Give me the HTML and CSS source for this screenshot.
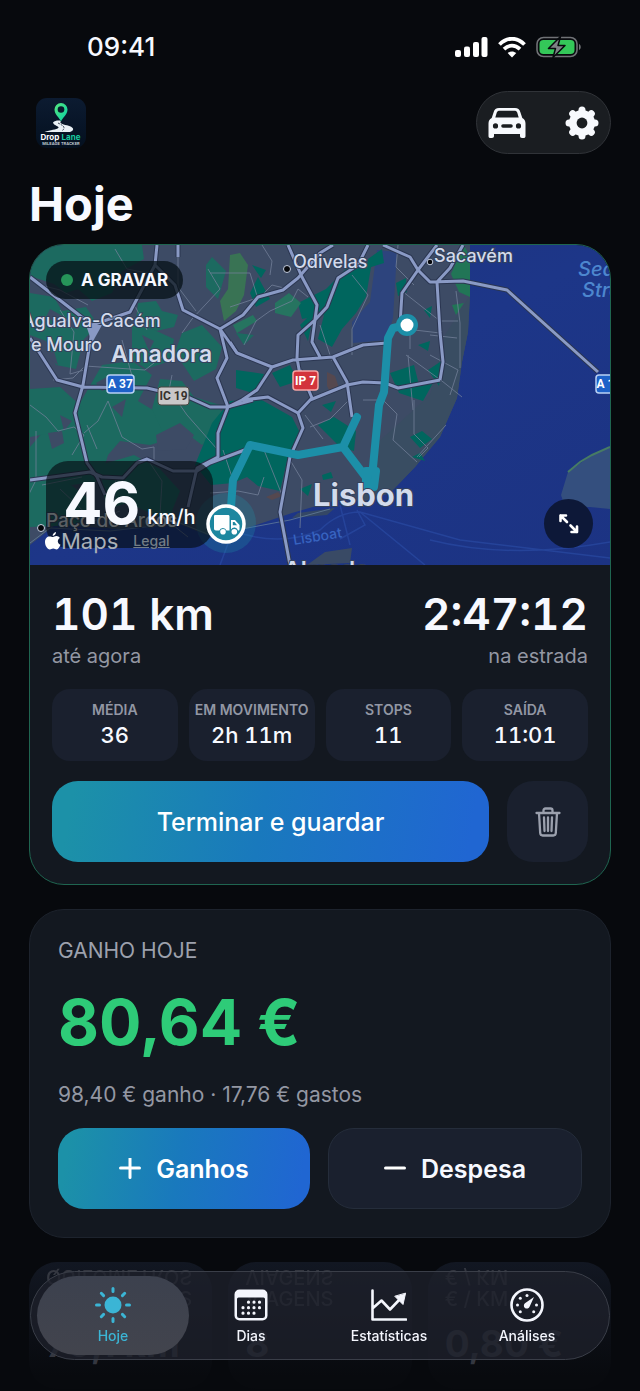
FILE: index.html
```html
<!DOCTYPE html>
<html lang="pt">
<head>
<meta charset="utf-8">
<meta name="viewport" content="width=device-width, initial-scale=1">
<title>Drop Lane</title>
<link rel="stylesheet" href="styles.css">
</head>
<body>
<div class="app">
  <div class="status">
    <time class="clock">09:41</time>
    <div class="status-icons">
      <svg width="33" height="21" viewBox="0 0 33 21" fill="#fff"><rect x="0" y="13" width="6" height="7" rx="2"/><rect x="9" y="9.500" width="6" height="10.500" rx="2"/><rect x="18" y="5" width="6" height="15" rx="2"/><rect x="26.500" y="0" width="6" height="20" rx="2"/></svg>
      <svg width="28" height="21" viewBox="0 0 28 21" fill="none" stroke="#fff" stroke-width="3.800"><path d="M1.500 7.500C9-.2 19-.2 26.500 7.500"/><path d="M6 12.200c5-4.600 11-4.600 16 0"/><path d="M14 20.500l-4.300-4.400c2.700-2.100 5.900-2.100 8.600 0z" fill="#fff" stroke="none"/></svg>
      <svg width="46" height="23" viewBox="0 0 46 23"><rect x="1" y="1.500" width="40" height="19" rx="6.500" fill="none" stroke="#707276" stroke-width="1.600"/><rect x="3.500" y="4" width="35" height="14" rx="4" fill="#34c759"/><path d="M43 8v6c2.300-.8 2.300-5.200 0-6z" fill="#707276"/><path d="M24.500.5L12.500 12.500h7L17 21.500 29 9.500h-7z" fill="#7d8084" stroke="#07090d" stroke-width="1.500" stroke-linejoin="round"/></svg>
    </div>
  </div>

  <header class="top">
    <svg class="logo" viewBox="0 0 50 50" role="img" aria-label="Drop Lane">
      <defs><linearGradient id="lg" x1="0" y1="0" x2="0" y2="1"><stop offset="0" stop-color="#0c1b31"/><stop offset="1" stop-color="#04101f"/></linearGradient>
      <linearGradient id="pin" x1="0" y1="0" x2="1" y2="1"><stop offset="0" stop-color="#58e77d"/><stop offset="1" stop-color="#04cfa8"/></linearGradient></defs>
      <rect width="50" height="50" rx="11" fill="url(#lg)"/>
      <path d="M17 24.500c2-2 6-2.500 8-1.500-2 2 1 3.200 6 4.300 7 1.700 8 5 3 6.700H8.500c6-2 12-2.300 14-4.200 1-1.500-5-2.300-5.500-5.300z" fill="#e9f0f5"/>
      <path d="M22 25c5 2.500 8 4 4.500 7.500" fill="none" stroke="#0b192c" stroke-width=".8" stroke-dasharray="2 1"/>
      <path d="M25 23.500c-1.500-4-6.500-7-6.500-12a6.500 6.500 0 0 1 13 0c0 5-5 8-6.500 12z" fill="url(#pin)"/><circle cx="25" cy="11.500" r="3.300" fill="#0a192d"/>
      <text x="4.500" y="41.500" class="logo-name" fill="#fff">Drop</text><text x="25.500" y="41.500" class="logo-name" fill="#18cba0">Lane</text>
      <text x="25" y="47" text-anchor="middle" class="logo-sub" fill="#cbd5de">MILEAGE TRACKER</text>
    </svg>
    <div class="actions">
      <button class="icon-btn" aria-label="Veículo"><svg width="38" height="32" viewBox="0 0 38 32"><path fill="#f7f9fd" fill-rule="evenodd" d="M11 1h16c3 0 4.500 1.500 5.300 4l2 6c2.200 1.200 3.200 3 3.200 5.500V29c0 1.500-.7 2-2 2H34c-1.300 0-2-.7-2-2v-2H6v2c0 1.300-.7 2-2 2H2.500c-1.300 0-2-.5-2-2V16.500c0-2.500 1-4.300 3.200-5.500l2-6C6.500 2.500 8 1 11 1zm.7 2.800c-1.500 0-2.500.5-3 2L7.300 10.500h23.400l-1.400-4.700c-.5-1.500-1.500-2-3-2zM7.500 16.300a2.600 2.600 0 1 0 0 5.200 2.600 2.600 0 0 0 0-5.200zm23 0a2.600 2.600 0 1 0 0 5.200 2.600 2.600 0 0 0 0-5.200zM15 17.300c-2.300 0-2.300 3.400 0 3.400h8c2.300 0 2.300-3.400 0-3.400z"/></svg></button>
      <button class="icon-btn" aria-label="Definições"><svg width="34" height="34" viewBox="-17 -17 34 34"><path d="M0-13V13M-13 0H13M-9.300-9.300L9.300 9.300M9.300-9.300L-9.300 9.300" stroke="#f7f9fd" stroke-width="7" stroke-linecap="round"/><circle r="13" fill="#f7f9fd"/><circle r="5.400" fill="#1a1d21"/></svg></button>
    </div>
  </header>

  <h1 class="title">Hoje</h1>

  <section class="card trip">
    <div class="map">
      <svg class="map-art" viewBox="0 0 580 320" preserveAspectRatio="xMidYMid slice">
        <defs><linearGradient id="sea" x1="0" y1="0" x2="1" y2="1"><stop offset="0" stop-color="#1d337c"/><stop offset=".5" stop-color="#1d3688"/><stop offset="1" stop-color="#1c3383"/></linearGradient></defs>
        <rect width="580" height="320" fill="url(#sea)"/>
        <path d="M0 0H440V50L438 87 432 117 427 153 410 192 385 222 360 248 335 256 307 255 262 268 217 283 177 290 147 278 90 284 25 280 0 300z" fill="#3d4b65"/>
        <path d="M440 50L438 87 432 117 427 153 410 192 385 222 360 248 330 255 345 200 400 150 415 90z" fill="#394d62"/>
        <path d="M580 202L562 210 538 227 531 250 535 262 560 262 580 264z" fill="#344f7e"/>
        <path d="M538 227l12-10 12-7 18-8" fill="none" stroke="#477b64" stroke-width="2"/>
        <path d="M322 303L320 318 277 320 295 307z" fill="#394a65"/>
        <path d="M268 268l37-5-8 7-35 3z" fill="#344765"/>
        <path d="M347 5l20 2-4 66-6 22-34 3-1-21 18-20z" fill="#2d447d"/>
        <g fill="#1c6a60">
          <path d="M0 0h112l2 14-22 12-10 22-20 8-14-12-12 4-12-9-24-8z"/>
          <path d="M0 48l24 4 8 14 24-4 12 18-14 14-8 30-20-4-10-24-16-6z"/>
          <path d="M108 58l18-2 6 10 16 4-4 12-18 4-20-10z"/><path d="M102 80l20 4 22 10-4 22-24 8-14-10z"/>
          <path d="M152 88l20-8 20 22-6 22-22 12-12-18-8-8z"/><path d="M72 120l30-4 20 14-14 26 20 12 18 24-26 8-30-4-12 14-8 26-28 4-42-6v-32l26-30 24-14z"/>
          <path d="M0 144l30-2 22 20-20 24-32 6z"/><path d="M130 134l22 2 12 16 26 8 4 22-22 18-16-12-20 6-14-30z"/>
          <path d="M176 20l6-8 14 14-8 28-12-12zM206 88l18 2-10 10z"/><path d="M0 226l28 4 34 26-12 24-50 2z"/><path d="M70 220l34-10 26 14 20 22-12 30-40-18-22 6z"/>
        </g>
        <g fill="#00665e">
          <path d="M182 178l18-22 30-2 32 18 8 16-13 28-7 30-22-5-11-9-14 6-22 2-16-20z"/>
          <path d="M268 58l28-14 20-20 26-8-6 36-10 16-14 16-10 18-14-8 6-24-22 4z"/><path d="M270 80l14-14-6 30zM220 48l8-16 12 22-14 8zM338 14l14-10 2 14-16 5z"/>
          <path d="M360 128l24-8 5 20 14-2-10 18-24-8zM366 38l10-5 1 14-9 4zM388 100l12-4-2 10zM394 65l8-4-2 12z"/>
          <path d="M380 192l12-6 10 8-12 9zM288 180l16-8 22 14-2 20-14-4zM292 160l14-4-5 11zM270 244l12-5-4 12zM292 230l9-3 2 6-10 2zM382 212l8-4 5 8z"/>
          <path d="M206 125l28 4-8 20-20-6zM242 128l18-8 8 16-18 6zM398 125l15-10-4 26zM222 20l14 5-5 8z"/>
        </g>
        <path d="M434 0l6 12v40l-11-5-8-18zM422 60l12-2-8 12z" fill="#217556"/>
        <g fill="#397354"><path d="M200 10l10-2 8 12-4 30-8 16-12 10-4-20 8-12z"/><path d="M245 58l14-10 12 10-10 14-16-4zM203 80l20-10 4 6-20 12z" fill="#267460"/></g>
        <path d="M297 127l8 4 4 12-8 6-4-8zM236 252l12-5 4 4-10 4z" fill="#55484f"/>
        <g fill="#3d4b65"><path d="M20 64l18 10 14 0-4 10-18-4-14-8zM30 170l12 6-8 10zM82 162l14-8-4 18zM126 190l24-12 14 12-8 14-28 2zM18 188l14-2 2 12-12 6zM112 90l12 6-5 10zM66 138l14-8 6 10-14 6zM14 110l10-4 4 14z"/></g>
        <g fill="none" stroke="#75829b" stroke-width="1" opacity=".75">
          <path d="M10 40l20 5 28 15M85 4l12 20 20 4M30 65l14 22-4 42 14-4M23 135l20-2 12-12 60 4 18-14M92 95l10 36M117 85l-12-24M142 130l-4 20M0 160l16 12 12 14 16-4 10 8-12 20M6 186v49l-10 20M54 188l14-12 10-20 14 36 20 12 12-2v14M57 180l10 24M143 150l14 20 30 34M148 4v38l18 24M178 24l12 20-28 30-10 14"/>
          <path d="M180 28h40l8 26 14-14 16 4M232 0l10 16-2 14M200 62l30-10M214 100l12-24 14-10 22-10 6-12 10 8M290 80l12 36M322 30l16 20-16 34v26M368 0l-2 22 18 18M372 46l38 30M376 84l34 4M376 110l36 26 20 16M378 110l5 55M380 104v-24M426 46l4 32v45M408 76h20M400 90l27 3M400 110l28 15-8 25"/>
          <path d="M180 248l28-2 20 4 6-18M234 205l18 45M203 235l-10-30M260 215l12 20-2 48M280 182l20-8 20-20M275 170l18 24M333 155l20 0 14 14-4 26 24 22M384 155v34l14 14-9 9M416 180l-29 32M120 218l12 18-2 34 28 22M12 240l40-8M30 244l34 32 26-10M86 234l-4 48"/>
          <path d="M0 298l20-15 60 3 70-8 30 12 80-15 40-11" stroke="#66809c"/>
        </g>
        <path d="M200 285q50 18 90 0 18-18 40-18l100 28 150 18M330 267l65 53M320 300l-10-40M327 265l8 15-25 14M190 320l18-48M400 295q80 20 180 2" fill="none" stroke="#294aa3" stroke-width="1.500" opacity=".7"/>
        <g class="roads"><g id="roads">
          <path d="M0 32L62 80 100 67 125 20 127 0M63 80L53 140 45 168 57 218 67 232 75 250M0 93L27 135 53 142 117 143 160 153 180 162 197 162 223 155M125 20L145 40 153 65 190 84 207 108M190 84L197 113 187 133 198 162 188 188V212L167 223 158 262"/>
          <path d="M190 84L213 70 228 52 253 45 268 33 290 8 303 0M148 0v12M258 0L272 32 287 60 282 97 290 112M338 0L328 20 308 33 297 62 285 75 268 90 267 113 270 130M200 97L207 108 242 122 263 115 303 112 333 100 357 98M242 122L227 145 212 155 198 162M303 112L317 137 322 172M212 155L238 152 268 168"/>
          <path d="M270 125L282 153M280 155L317 140 333 137 355 138 368 143 410 135M282 153L268 168 273 183 260 212 250 267 260 320M353 0L380 12 388 25 400 37 433 36 477 45 568 127M407 0L388 25 372 48 370 80M407 37L410 87 413 117 410 135M433 0L420 23 407 37"/>
          <path d="M0 235L60 227 72 232 93 233 107 218 117 214 143 226 167 226 180 218 220 203"/>
        </g></g>
        <use href="#roads" class="roads-top"/>
        <path d="M56 80h16l-10 18z" fill="#8999c4"/>
        <path d="M377 80L363 83 358 93 354 147 349 160 343 222 338 240M338 235L313 202 327 172M313 202L268 210 220 200 203 235 201 262" class="route"/>
        <path d="M336 226h10l-2 16h-8z" class="route"/>
        <circle cx="377" cy="80" r="11" fill="#1c8fa8"/><circle cx="377" cy="80" r="6.500" fill="#fff"/>
        <circle cx="196" cy="278" r="30" fill="#1c8fa8" opacity=".28"/>
        <g fill="#05070b" stroke="#c5cee0" stroke-width="1"><circle cx="257" cy="24" r="3.500"/><circle cx="400" cy="17" r="2.800"/><circle cx="11" cy="283" r="3.500"/></g>
        <g class="place">
          <text x="263" y="23">Odivelas</text><text x="404" y="17">Sacavém</text><text x="-8" y="82">Agualva-Cacém</text><text x="1" y="106">e Mouro</text>
          <text x="81" y="117" class="town">Amadora</text><text x="283" y="261" class="city">Lisbon</text><text x="16" y="282" class="veiled">Paço de Arcos</text>
          <text x="254" y="333" class="town">Almada</text>
        </g>
        <g class="water-name"><text x="548" y="31">Sea of</text><text x="552" y="52">Straw</text><text x="264" y="300" class="ferry" transform="rotate(-9 264 300)">Lisboat</text></g>
        <g class="shield">
          <rect x="77" y="130" width="27" height="18" rx="3" fill="#1d61c8" stroke="#b9d1f4" stroke-width="1.500"/><text x="90.500" y="143">A 37</text>
          <rect x="566" y="130" width="27" height="18" rx="3" fill="#1d61c8" stroke="#b9d1f4" stroke-width="1.500"/><text x="579" y="143">A 12</text>
          <rect x="128" y="142" width="31" height="18" rx="3" fill="#c9c8c9" stroke="#4b4742" stroke-width="1"/><text x="143.500" y="155" class="dark">IC 19</text>
          <rect x="263" y="126" width="25" height="19" rx="3" fill="#d3343c" stroke="#f5a5a5" stroke-width="1.500"/><text x="275.500" y="140">IP 7</text>
        </g>
      </svg>
      <div class="speed"><strong>46</strong><span>km/h</span></div>
      <svg class="truck" viewBox="0 0 40 40"><circle cx="20" cy="20" r="18" fill="#1d879f" stroke="#fff" stroke-width="3.500"/><path d="M9 11h13c1 0 1.500.5 1.500 1.500v14h-3a3.800 3.800 0 0 0-7.200 0h-3.300c-1.300 0-2-.7-2-2V12.500c0-1 .5-1.500 1-1.500zM25 16h4l4.500 5v4c0 1-.5 1.500-1.500 1.500a3.800 3.800 0 0 0-7-1z" fill="#fff"/><path d="M26.800 18h1.700l2.500 3.200h-4.200z" fill="#1d879f"/><circle cx="17" cy="27.700" r="2.800" fill="#fff"/><circle cx="28.300" cy="27.700" r="2.800" fill="#fff"/></svg>
      <span class="recording"><i></i>A GRAVAR</span>
      <div class="attribution">
        <svg width="16" height="18" viewBox="0 0 16 18" fill="currentColor"><path d="M11 0c.1 2-1.500 3.800-3.300 3.900C7.500 2.100 9.100.3 11 0zM8 5c.8 0 1.900-1 3.500-.9 1.300 0 2.600.7 3.300 1.800-3 1.800-2.400 5.600.7 6.800-.8 2.100-2.200 4.600-3.900 4.700-1.300 0-1.800-.8-3.400-.8s-2.100.8-3.300.8C2.500 17.500 0 13.500 0 9.900c0-3.500 2.200-5.500 4.500-5.500 1.500 0 2.600.6 3.500.6z"/></svg>
        <span>Maps</span><a href="#legal">Legal</a>
      </div>
      <button class="expand" aria-label="Expandir mapa"><svg width="22" height="22" viewBox="0 0 22 22" fill="none" stroke="#fff" stroke-width="2.600" stroke-linecap="round" stroke-linejoin="round"><path d="M9 9L2.500 2.500M2.500 8V2.500H8M12.500 12.500l6.500 6.500M19 13.500V19h-5.500"/></svg></button>
    </div>
    <div class="trip-body">
      <div class="totals">
        <div><p class="total">101 km</p><p class="muted">até agora</p></div>
        <div class="right"><p class="total">2:47:12</p><p class="muted">na estrada</p></div>
      </div>
      <dl class="tiles">
        <div class="tile"><dt>MÉDIA</dt><dd>36</dd></div>
        <div class="tile"><dt>EM MOVIMENTO</dt><dd>2h 11m</dd></div>
        <div class="tile"><dt>STOPS</dt><dd>11</dd></div>
        <div class="tile"><dt>SAÍDA</dt><dd>11:01</dd></div>
      </dl>
      <div class="row">
        <button class="btn primary">Terminar e guardar</button>
        <button class="btn trash" aria-label="Eliminar"><svg width="26" height="30" viewBox="0 0 26 30" fill="none" stroke="#9ba0ad" stroke-width="2.300" stroke-linecap="round" stroke-linejoin="round"><path d="M1.500 6h23M8.500 6V3.500c0-1.300.7-2 2-2h5c1.300 0 2 .7 2 2V6M4 6l1.200 20c.1 1.500 1 2.500 2.500 2.500h10.600c1.500 0 2.400-1 2.500-2.500L22 6M9 10.500l.5 13.500M13 10.500V24M17 10.500L16.500 24"/></svg></button>
      </div>
    </div>
  </section>

  <section class="card earnings">
    <h2>GANHO HOJE</h2>
    <p class="amount">80,64 €</p>
    <p class="muted">98,40 € ganho · 17,76 € gastos</p>
    <div class="row">
      <button class="btn primary"><svg width="22" height="22" viewBox="0 0 22 22" stroke="#fff" stroke-width="3" stroke-linecap="round"><path d="M11 .5v19M1.500 10h19"/></svg>Ganhos</button>
      <button class="btn secondary"><svg width="22" height="22" viewBox="0 0 22 22" stroke="#fff" stroke-width="3" stroke-linecap="round"><path d="M1.500 10h19"/></svg>Despesa</button>
    </div>
  </section>

  <section class="summary">
    <div class="mini"><h3>QUILÓMETROS</h3><p>70,1 km</p></div>
    <div class="mini"><h3>VIAGENS</h3><p>8</p></div>
    <div class="mini"><h3>€ / KM</h3><p>0,80 €</p></div>
  </section>
</div>

<nav class="tabs">
  <a class="tab active" href="#hoje"><svg viewBox="0 0 36 36" stroke="#3bb5d5" stroke-width="3" stroke-linecap="round"><circle cx="18" cy="18" r="8.500" fill="#3bb5d5" stroke="none"/><path d="M18 1.500v3M18 31.500v3M1.500 18h3M31.500 18h3M6.300 6.300l2.300 2.300M27.400 27.400l2.300 2.300M6.300 29.700l2.300-2.300M27.400 8.600l2.300-2.300"/></svg>Hoje</a>
  <a class="tab" href="#dias"><svg viewBox="0 0 36 36"><path fill="#f4f6fd" fill-rule="evenodd" d="M6.500 2.500h23a5 5 0 0 1 5 5v21a5 5 0 0 1-5 5h-23a5 5 0 0 1-5-5v-21a5 5 0 0 1 5-5zM5.500 10.500a1.500 1.500 0 0 0-1.500 1.500v16.500a2.500 2.500 0 0 0 2.500 2.500h23a2.500 2.500 0 0 0 2.500-2.500V12a1.500 1.500 0 0 0-1.500-1.500z"/><path d="M15.500 15.200h14M10 20.700h19M10 26.200h14" stroke="#f4f6fd" stroke-width="3.200" stroke-linecap="round" stroke-dasharray="0 5.500"/></svg>Dias</a>
  <a class="tab" href="#estatisticas"><svg viewBox="0 0 36 36" fill="none" stroke="#f4f6fd" stroke-width="2.600" stroke-linecap="round" stroke-linejoin="round"><path d="M1.500 3.500v29H35M2 21l8.500-7.500 8.500 9L30 11"/><path d="M34.500 6.500l-2.500 11-8-8z" fill="#f4f6fd" stroke-width="1"/></svg>Estatísticas</a>
  <a class="tab" href="#analises"><svg viewBox="0 0 36 36"><circle cx="18" cy="18" r="15.500" fill="none" stroke="#f4f6fd" stroke-width="2.600"/><g fill="#f4f6fd"><circle cx="18" cy="8.500" r="1.500"/><circle cx="11.300" cy="11.300" r="1.500"/><circle cx="8.500" cy="18" r="1.500"/><circle cx="11.300" cy="24.700" r="1.500"/><circle cx="24.700" cy="24.700" r="1.500"/><circle cx="27.500" cy="18" r="1.500"/><path d="M25 10l-4.300 9.500a3 3 0 1 1-4.400-3.500z"/></g></svg>Análises</a>
</nav>
</body>
</html>
```
FILE: styles.css
```css
* { box-sizing: border-box; }
body { margin: 0; background: #07090d; color: #f7f9ff; font-family: Inter, "Noto Sans", sans-serif; }
h1, h2, h3, p, dl, dd { margin: 0; }
button { border: 0; padding: 0; background: none; color: inherit; font: inherit; cursor: pointer; }
a { color: inherit; }
svg { display: block; flex: none; }
.app { padding: 0 29px; }

.status { display: flex; justify-content: space-between; align-items: center; height: 91px; padding: 3px 29px 0 58px; }
.clock { font-size: 26px; line-height: 32px; font-weight: 500; }
.status-icons { display: flex; align-items: center; gap: 10px; }

.top { display: flex; justify-content: space-between; align-items: center; padding-left: 7px; }
.logo { width: 50px; height: 50px; }
.logo-name { font-size: 8px; font-weight: 700; }
.logo-sub { font-size: 4px; font-weight: 600; }
.actions { display: flex; align-items: center; justify-content: space-between; width: 135px; height: 63px; padding: 0 11px; border-radius: 32px; background: #1a1d21; border: 1px solid #303338; }
.icon-btn { display: grid; place-items: center; }

.title { height: 90px; padding-top: 22px; font-size: 47px; line-height: 56px; font-weight: 700; }

.card { background: #131820; border: 1px solid #1d232d; border-radius: 35px; overflow: hidden; }
.trip { border-color: #1f6550; }
.map { position: relative; height: 320px; overflow: hidden; }
.map-art { width: 100%; height: 100%; }
.roads { fill: none; stroke: #2b3651; stroke-width: 5; stroke-linejoin: round; }
.roads-top { fill: none; stroke: #8a9ac5; stroke-width: 3; stroke-linejoin: round; }
.route { fill: none; stroke: #1c8fa8; stroke-width: 8; stroke-linecap: round; stroke-linejoin: round; }
.place { fill: #d3dbec; font-size: 18px; font-weight: 500; paint-order: stroke; stroke: #34425c; stroke-width: 2px; }
.town { font-size: 23px; font-weight: 600; }
.city { font-size: 31px; font-weight: 700; }
.veiled { fill: #fff; font-size: 19px; }
.water-name { fill: #4d87cf; font-size: 20px; font-weight: 500; font-style: italic; }
.ferry { fill: #3763c0; font-size: 14px; font-style: normal; }
.shield { fill: #fff; font-family: Roboto, sans-serif; font-size: 12px; font-weight: 700; text-anchor: middle; }
.dark { fill: #37332f; }

.recording { position: absolute; left: 16px; top: 16px; display: flex; align-items: center; gap: 8px; height: 38px; padding: 0 15px; border-radius: 19px; background: rgba(6, 16, 22, .74); font-size: 17px; line-height: 20px; font-weight: 700; white-space: nowrap; }
.recording i { width: 12px; height: 12px; border-radius: 50%; background: #269559; }
.speed { position: absolute; left: 16px; bottom: 17px; display: flex; align-items: baseline; justify-content: center; gap: 7px; width: 167px; height: 87px; padding-top: 11px; border-radius: 22px; background: rgba(6, 14, 20, .66); }
.speed strong { font-size: 58px; line-height: 62px; font-weight: 700; }
.speed span { font-size: 20px; font-weight: 500; }
.truck { position: absolute; left: 176px; bottom: 21px; width: 40px; height: 40px; }
.attribution { position: absolute; left: 15px; bottom: 10px; display: flex; align-items: center; color: #a9b0b8; font-size: 22px; line-height: 28px; }
.attribution svg { color: #fff; }
.attribution a { margin-left: 15px; color: #737d86; font-size: 14px; font-weight: 500; }
.expand { position: absolute; right: 17px; bottom: 17px; display: grid; place-items: center; width: 49px; height: 49px; border-radius: 50%; background: #0d1838; }

.trip-body { padding: 23px 22px 22px; }
.totals { display: flex; justify-content: space-between; }
.right { text-align: right; }
.total { font-size: 44px; line-height: 52px; font-weight: 600; font-variant-numeric: tabular-nums; }
.muted { color: #9397a3; font-size: 20px; line-height: 32px; }
.tiles { display: grid; grid-template-columns: repeat(4, 1fr); gap: 11px; margin-top: 17px; }
.tile { display: flex; flex-direction: column; align-items: center; justify-content: center; height: 72px; border-radius: 18px; background: #1a202e; white-space: nowrap; }
.tile dt { color: #9297a4; font-size: 14px; line-height: 20px; font-weight: 600; }
.tile dd { font-size: 22px; line-height: 30px; font-weight: 500; font-variant-numeric: tabular-nums; }
.row { display: flex; gap: 18px; }
.trip .row { margin-top: 20px; }
.btn { display: flex; flex: 1; align-items: center; justify-content: center; gap: 15px; height: 81px; border-radius: 26px; font-size: 25px; font-weight: 600; }
.primary { color: #fff; background: linear-gradient(100deg, #1c91a8 5%, #1979bd 48%, #2066d2 95%); }
.trip .primary { font-weight: 500; }
.trash { flex: 0 0 81px; background: #1a202e; }
.secondary { background: #1a202e; border: 1px solid #252d3b; }

.earnings { margin-top: 24px; padding: 25px 28px 28px; }
.earnings h2 { color: #9da1ad; font-size: 21px; line-height: 32px; font-weight: 400; }
.amount { margin: 14px 0 16px; color: #2ecb78; font-size: 63px; line-height: 82px; font-weight: 700; }
.earnings .muted { font-size: 21px; }
.earnings .row { margin-top: 17px; }

.summary { display: grid; grid-template-columns: repeat(3, 1fr); gap: 16px; height: 127px; margin-top: 24px; }
.mini { padding: 26px 17px 0; border-radius: 28px; background: linear-gradient(#121722, #080a0e 90%); overflow: hidden; color: #343740; white-space: nowrap; }
.mini h3 { font-size: 20px; line-height: 22px; font-weight: 500; -webkit-box-reflect: above 0; }
.mini p { margin-top: 12px; font-size: 37px; line-height: 44px; font-weight: 700; }

.tabs { position: fixed; left: 30px; right: 30px; bottom: 31px; display: grid; grid-template-columns: repeat(4, 1fr); height: 89px; padding: 0 13px; border: 1px solid #3a3e48; border-radius: 45px; background: rgba(30, 33, 44, .76); }
.tab { position: relative; display: flex; flex-direction: column; align-items: center; padding-top: 15px; color: #f4f6fd; font-size: 14px; line-height: 20px; font-weight: 500; text-decoration: none; gap: 3px; }
.tab svg { width: 36px; height: 36px; }
.active { color: #3bb5d5; }
.active::before { content: ""; position: absolute; inset: 4px -7px; z-index: -1; border-radius: 40px; background: linear-gradient(#3c414e, #42444d); }
```
